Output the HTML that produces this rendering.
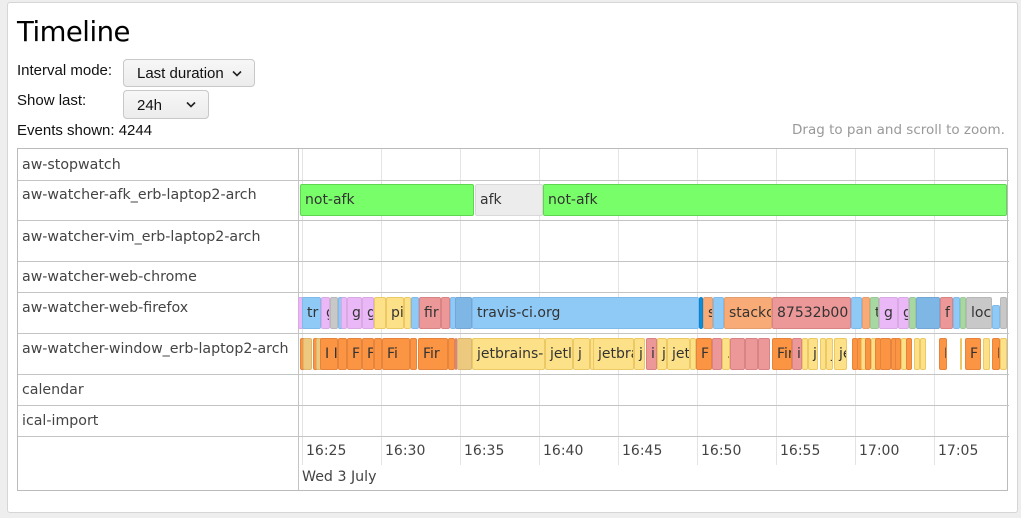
<!DOCTYPE html>
<html><head><meta charset="utf-8"><style>
*{box-sizing:border-box;margin:0;padding:0}
body{width:1021px;height:518px;background:#eee;font-family:"Liberation Sans","DejaVu Sans",sans-serif;position:relative;overflow:hidden}
.card{position:absolute;left:7px;top:2px;width:1011px;height:511px;background:#fff;border:1px solid #d6d6d6;border-radius:3px}
h1{position:absolute;left:17px;top:16px;font-weight:normal;font-size:27.5px;color:#000;font-family:"DejaVu Sans","Liberation Sans",sans-serif;letter-spacing:-0.5px}
.t{position:absolute;font-size:15px;color:#111}
.btn{position:absolute;background:linear-gradient(#f7f7f7,#ececec);border:1px solid #c8c8c8;border-radius:4px;font-size:15px;color:#111}
.btn svg{position:absolute}
.tbl{position:absolute;left:17px;top:148px;width:991px;height:343px;border:1px solid #bbb}
.h{position:absolute;left:0;width:991px;height:0;border-top:1px solid #c4c4c4}
.v{position:absolute;width:0;border-left:1px solid #e4e4e4;top:0}
.lb{position:absolute;left:4px;font-family:"DejaVu Sans",sans-serif;font-size:14.2px;color:#444}
.bar i{position:absolute;display:block;height:32px;border:1px solid rgba(0,0,0,0.08);border-radius:2px;font-style:normal;font-family:"DejaVu Sans",sans-serif;font-size:14px;color:#333;line-height:31px;padding-left:4px;overflow:hidden;white-space:nowrap}
.b{background:#8fc9f6;border-color:#7fbaea!important}
.B{background:#7eb6e6}
.p{background:#ebb8f7}
.g{background:#c8c8c8}
.y{background:#fde188;border-color:#ecc964!important}
.r{background:#ec9899;border-color:#d98385!important}
.o{background:#fb9443;border-color:#e5843a!important}
.O{background:#f8ab77}
.n{background:#a8d8a2}
.tan{background:#ecc97e}
.ax{position:absolute;top:443px;font-family:"DejaVu Sans",sans-serif;font-size:14px;color:#444}
</style></head><body>
<div class="card"></div>
<h1>Timeline</h1>
<div class="t" style="left:17px;top:62px">Interval mode:</div>
<div class="btn" style="left:123px;top:59px;width:132px;height:28px;padding:5px 0 0 13px">Last duration<svg style="left:108px;top:10px" width="10" height="7" viewBox="0 0 10 7"><path d="M1 1.5L5 5.5L9 1.5" fill="none" stroke="#222" stroke-width="1.6"/></svg></div>
<div class="t" style="left:17px;top:92px">Show last:</div>
<div class="btn" style="left:123px;top:90px;width:86px;height:29px;padding:6px 0 0 13px">24h<svg style="left:62px;top:10px" width="10" height="7" viewBox="0 0 10 7"><path d="M1 1.5L5 5.5L9 1.5" fill="none" stroke="#222" stroke-width="1.6"/></svg></div>
<div class="t" style="left:17px;top:122px">Events shown: 4244</div>
<div class="t" style="left:792px;top:122px;color:#999;font-family:'DejaVu Sans',sans-serif;font-size:13.5px">Drag to pan and scroll to zoom.</div>

<div class="tbl">
<div class="v" style="left:280px;height:341px;border-color:#c4c4c4"></div>
<div class="v" style="left:284px;height:316px"></div>
<div class="v" style="left:363px;height:316px"></div>
<div class="v" style="left:442px;height:316px"></div>
<div class="v" style="left:521px;height:316px"></div>
<div class="v" style="left:600px;height:316px"></div>
<div class="v" style="left:679px;height:316px"></div>
<div class="v" style="left:758px;height:316px"></div>
<div class="v" style="left:837px;height:316px"></div>
<div class="v" style="left:916px;height:316px"></div>
<div class="h" style="top:31px"></div>
<div class="h" style="top:71px"></div>
<div class="h" style="top:112px"></div>
<div class="h" style="top:143px"></div>
<div class="h" style="top:184px"></div>
<div class="h" style="top:225px"></div>
<div class="h" style="top:256px"></div>
<div class="h" style="top:287px"></div>
<div class="lb" style="top:8px">aw-stopwatch</div>
<div class="lb" style="top:38px">aw-watcher-afk_erb-laptop2-arch</div>
<div class="lb" style="top:80px">aw-watcher-vim_erb-laptop2-arch</div>
<div class="lb" style="top:120px">aw-watcher-web-chrome</div>
<div class="lb" style="top:151px">aw-watcher-web-firefox</div>
<div class="lb" style="top:192px">aw-watcher-window_erb-laptop2-arch</div>
<div class="lb" style="top:233px">calendar</div>
<div class="lb" style="top:264px">ical-import</div>
<div class="lb" style="top:320px;left:284px">Wed 3 July</div>
</div>
<div class="ax" style="left:306px">16:25</div>
<div class="ax" style="left:385px">16:30</div>
<div class="ax" style="left:464px">16:35</div>
<div class="ax" style="left:543px">16:40</div>
<div class="ax" style="left:622px">16:45</div>
<div class="ax" style="left:701px">16:50</div>
<div class="ax" style="left:780px">16:55</div>
<div class="ax" style="left:859px">17:00</div>
<div class="ax" style="left:938px">17:05</div>

<div class="bar">
<i style="left:300px;top:184px;width:174px;background:#78fe68;border-color:#5fd64f">not-afk</i>
<i style="left:475px;top:184px;width:68px;background:#ececec">afk</i>
<i style="left:543px;top:184px;width:464px;background:#78fe68;border-color:#5fd64f">not-afk</i>

<i class="p" style="left:298px;top:297px;width:4px"></i>
<i class="b" style="left:302px;top:297px;width:19px">tr</i>
<i class="p" style="left:321px;top:297px;width:9px">g</i>
<i class="g" style="left:330px;top:297px;width:8px"></i>
<i class="b" style="left:338px;top:297px;width:3px"></i>
<i class="p" style="left:341px;top:297px;width:6px"></i>
<i class="p" style="left:347px;top:297px;width:15px">g</i>
<i class="p" style="left:362px;top:297px;width:12px">g</i>
<i class="y" style="left:374px;top:297px;width:12px"></i>
<i class="y" style="left:386px;top:297px;width:18px">pi</i>
<i class="y" style="left:404px;top:297px;width:7px"></i>
<i class="b" style="left:411px;top:297px;width:8px"></i>
<i class="r" style="left:419px;top:297px;width:22px">fir</i>
<i class="r" style="left:441px;top:297px;width:9px"></i>
<i class="b" style="left:450px;top:297px;width:5px"></i>
<i class="B" style="left:455px;top:297px;width:17px"></i>
<i class="b" style="left:472px;top:297px;width:227px">travis-ci.org</i>
<i style="left:699px;top:297px;width:4px;background:#0a8ee0;padding:0"></i>
<i class="O" style="left:703px;top:297px;width:10px">s</i>
<i class="b" style="left:713px;top:297px;width:11px"></i>
<i class="O" style="left:724px;top:297px;width:48px">stackc</i>
<i class="r" style="left:772px;top:297px;width:79px">87532b00</i>
<i class="b" style="left:851px;top:297px;width:11px"></i>
<i class="O" style="left:862px;top:297px;width:8px"></i>
<i class="n" style="left:870px;top:297px;width:9px">t</i>
<i class="p" style="left:879px;top:297px;width:19px">g</i>
<i class="p" style="left:898px;top:297px;width:11px">g</i>
<i class="n" style="left:909px;top:297px;width:7px"></i>
<i class="B" style="left:916px;top:297px;width:24px"></i>
<i class="r" style="left:940px;top:297px;width:13px">f</i>
<i class="b" style="left:953px;top:297px;width:7px"></i>
<i class="n" style="left:960px;top:297px;width:6px"></i>
<i class="g" style="left:966px;top:297px;width:26px">loc</i>
<i class="b" style="left:992px;top:305px;width:8px;height:24px"></i>
<i class="g" style="left:1000px;top:297px;width:7px"></i>

<i class="o" style="left:300px;top:338px;width:3px"></i>
<i class="tan" style="left:303px;top:338px;width:9px"></i>
<i class="o" style="left:313px;top:338px;width:3px"></i>
<i class="tan" style="left:316px;top:338px;width:3px"></i>
<i class="o" style="left:320px;top:338px;width:18px">I I</i>
<i class="o" style="left:338px;top:338px;width:9px"></i>
<i class="o" style="left:347px;top:338px;width:15px">F</i>
<i class="o" style="left:362px;top:338px;width:12px">F</i>
<i class="o" style="left:374px;top:338px;width:8px"></i>
<i class="o" style="left:382px;top:338px;width:28px">Fi</i>
<i class="o" style="left:410px;top:338px;width:7px"></i>
<i class="o" style="left:418px;top:338px;width:30px">Fir</i>
<i class="o" style="left:448px;top:338px;width:7px"></i>
<i class="r" style="left:455px;top:338px;width:2px;padding:0"></i>
<i class="tan" style="left:457px;top:338px;width:15px"></i>
<i class="y" style="left:472px;top:338px;width:73px">jetbrains-</i>
<i class="y" style="left:545px;top:338px;width:28px">jetl</i>
<i class="y" style="left:573px;top:338px;width:17px">j</i>
<i class="y" style="left:590px;top:338px;width:3px"></i>
<i class="y" style="left:593px;top:338px;width:41px">jetbra</i>
<i class="y" style="left:634px;top:338px;width:11px">j</i>
<i class="r" style="left:646px;top:338px;width:11px">i</i>
<i class="y" style="left:657px;top:338px;width:10px">j</i>
<i class="y" style="left:667px;top:338px;width:23px">jet</i>
<i class="y" style="left:690px;top:338px;width:6px"></i>
<i class="o" style="left:696px;top:338px;width:16px">F</i>
<i class="r" style="left:712px;top:338px;width:10px"></i>
<i class="y" style="left:722px;top:338px;width:8px">.</i>
<i class="r" style="left:730px;top:338px;width:15px"></i>
<i class="r" style="left:745px;top:338px;width:13px"></i>
<i class="r" style="left:758px;top:338px;width:12px"></i>
<i class="o" style="left:772px;top:338px;width:20px">Fir</i>
<i class="r" style="left:792px;top:338px;width:10px">i</i>
<i class="y" style="left:802px;top:338px;width:6px"></i>
<i class="y" style="left:808px;top:338px;width:10px">j</i>
<i class="y" style="left:820px;top:338px;width:6px"></i>
<i class="y" style="left:826px;top:338px;width:7px">j</i>
<i class="y" style="left:834px;top:338px;width:13px">je</i>
<i class="o" style="left:852px;top:338px;width:4px"></i>
<i class="o" style="left:857px;top:338px;width:3px"></i>
<i class="y" style="left:861px;top:338px;width:3px"></i>
<i class="o" style="left:865px;top:338px;width:3px"></i>
<i class="y" style="left:871px;top:338px;width:3px"></i>
<i class="o" style="left:875px;top:338px;width:3px"></i>
<i class="o" style="left:880px;top:338px;width:11px"></i>
<i class="o" style="left:891px;top:338px;width:3px"></i>
<i class="o" style="left:895px;top:338px;width:4px"></i>
<i class="y" style="left:901px;top:338px;width:4px"></i>
<i class="o" style="left:906px;top:338px;width:6px"></i>
<i class="y" style="left:914px;top:338px;width:4px"></i>
<i class="y" style="left:920px;top:338px;width:6px">/</i>
<i class="o" style="left:939px;top:338px;width:8px">I</i>
<i class="y" style="left:960px;top:338px;width:2px;padding:0"></i>
<i class="o" style="left:965px;top:338px;width:16px">F</i>
<i class="y" style="left:983px;top:338px;width:7px"></i>
<i class="o" style="left:992px;top:338px;width:8px">I</i>
<i class="y" style="left:1000px;top:338px;width:7px"></i>
</div>
</body></html>
